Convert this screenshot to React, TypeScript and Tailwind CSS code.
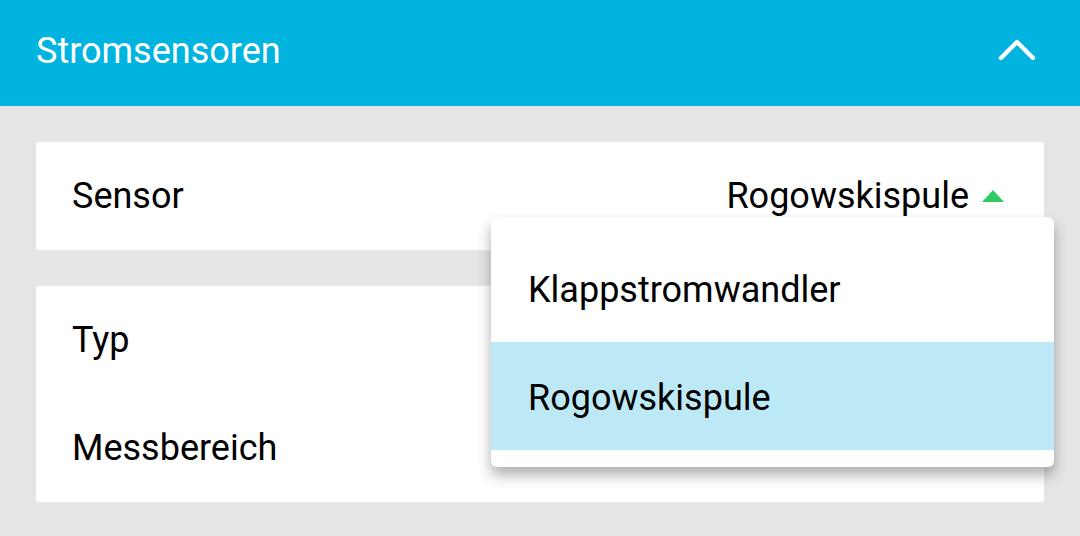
const options = ['Klappstromwandler', 'Rogowskispule']

export default function App() {
  const selected = 'Rogowskispule'

  return (
    <div className="h-[536px] w-[1080px] overflow-hidden bg-[#e5e5e5] font-['Roboto',sans-serif] text-black">
      <header className="flex h-[106px] items-center justify-between bg-[#00b4df] pl-[36px] pr-[44px]">
        <h1 className="-mt-[4px] text-[36px] text-white">Stromsensoren</h1>
        <svg width="38" height="22" viewBox="0 0 38 22" className="-mt-[6px]" fill="none">
          <polyline points="3,19 19,3 35,19" stroke="white" strokeWidth="4.4" strokeLinecap="round" strokeLinejoin="round" />
        </svg>
      </header>

      <div className="flex flex-col gap-[36px] px-[36px] pt-[36px]">
        <div className="relative flex h-[108px] items-center justify-between rounded-[3px] bg-white pl-[36px] pr-[40px]">
          <span className="text-[36px]">Sensor</span>
          <div className="flex items-center gap-[13px]">
            <span className="text-[36px]">{selected}</span>
            <span className="h-0 w-0 border-x-[11px] border-b-[12px] border-x-transparent border-b-[#2ecc5f]" />
          </div>

          <div className="absolute left-[455px] top-[75px] z-10 w-[563px] rounded-[6px] bg-white py-[17px] shadow-[0_8px_14px_rgba(0,0,0,0.32)]">
            {options.map((o) => (
              <div
                key={o}
                className={`flex h-[108px] items-center pl-[37px] pt-[4px] text-[36px] ${o === selected ? 'bg-[#bde9f6]' : ''}`}
              >
                {o}
              </div>
            ))}
          </div>
        </div>

        <div className="flex h-[216px] flex-col rounded-[3px] bg-white pl-[36px]">
          <div className="flex h-[108px] items-center text-[36px]">Typ</div>
          <div className="flex h-[108px] items-center text-[36px]">Messbereich</div>
        </div>
      </div>
    </div>
  )
}
